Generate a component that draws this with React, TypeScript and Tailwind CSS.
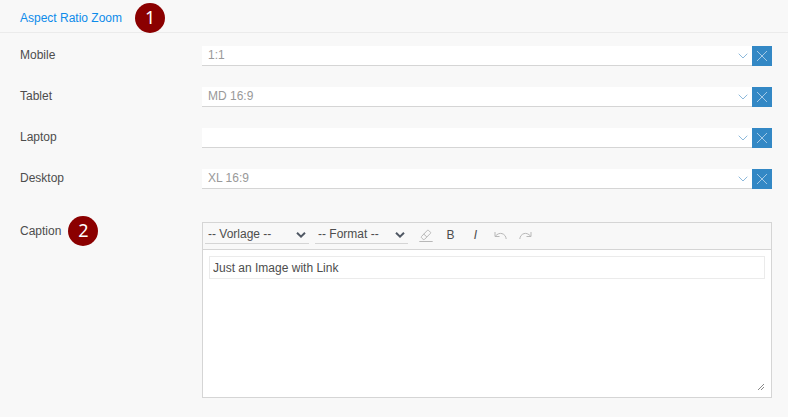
import type { ReactNode } from "react";

interface RatioField {
  id: string;
  label: string;
  value: string;
}

const ratioFields: RatioField[] = [
  { id: "mobile", label: "Mobile", value: "1:1" },
  { id: "tablet", label: "Tablet", value: "MD 16:9" },
  { id: "laptop", label: "Laptop", value: "" },
  { id: "desktop", label: "Desktop", value: "XL 16:9" },
];

function Marker({ children }: { children: ReactNode }) {
  return (
    <span className="flex size-[30px] shrink-0 items-center justify-center rounded-full bg-[#8b0000] pb-0.5 font-['Noto_Sans',sans-serif] text-[18px] leading-none text-white">
      {children}
    </span>
  );
}

function RatioRow({ id, label, value }: RatioField) {
  return (
    <div className="flex h-5 items-center">
      <label htmlFor={id} className="w-[182px] shrink-0 pb-0.5 leading-[18px]">
        {label}
      </label>
      <div className="relative h-5 min-w-0 flex-1">
        <select
          id={id}
          defaultValue={value}
          className="block h-5 w-full appearance-none border-b border-[#d5d5d5] bg-white px-1.5 pb-px text-[#999]"
        >
          <option value={value}>{value}</option>
        </select>
        <svg
          viewBox="0 0 10 6"
          className="pointer-events-none absolute top-[7px] right-1 h-1.5 w-2.5"
          fill="none"
          stroke="#8db9db"
        >
          <path d="M.7.7 5 5 9.3.7" />
        </svg>
      </div>
      <button
        type="button"
        aria-label={`Clear ${label}`}
        className="flex size-5 shrink-0 items-center justify-center bg-[#3388c5]"
      >
        <svg viewBox="0 0 10 10" className="size-2.5" fill="none" stroke="#a3c9e6">
          <path d="M0 0 10 10M10 0 0 10" />
        </svg>
      </button>
    </div>
  );
}

function ToolbarSelect({ label, text, width }: { label: string; text: string; width: string }) {
  return (
    <div className={`relative ${width}`}>
      <select
        aria-label={label}
        className="block h-4 w-full appearance-none border-b border-[#d5d5d5] bg-transparent px-[3px] pb-0.5 leading-[13px]"
      >
        <option>{text}</option>
      </select>
      <svg
        viewBox="0 0 10 6"
        className="pointer-events-none absolute top-1 right-[3px] h-1.5 w-2.5"
        fill="none"
        stroke="#4f5763"
        strokeWidth="2"
      >
        <path d="M1 .8 5 4.6 9 .8" />
      </svg>
    </div>
  );
}

function ToolbarButton({ label, children }: { label: string; children: ReactNode }) {
  return (
    <button
      type="button"
      aria-label={label}
      className="flex h-[25px] w-[25px] items-center justify-center pb-0.5"
    >
      {children}
    </button>
  );
}

function CaptionEditor() {
  return (
    <div className="min-w-0 flex-1 border border-[#d5d5d5] bg-white">
      <div className="flex h-[27px] items-center border-b border-[#d5d5d5] bg-[#f8f8f8] pl-0.5">
        <ToolbarSelect label="Vorlage" text="-- Vorlage --" width="w-[104px]" />
        <div className="w-1.5" />
        <ToolbarSelect label="Format" text="-- Format --" width="w-[93px]" />
        <div className="w-[5px]" />
        <ToolbarButton label="Remove formatting">
          <svg viewBox="0 0 14 14" className="mt-0.5 size-3.5" fill="none" stroke="#b8b8b8">
            <path d="M8.4 1.3Q9 .8 9.6 1.4L11.4 3.2Q12 3.8 11.4 4.4L5.6 10.3Q5 10.9 4.2 10.4L2.5 8.8Q1.9 8.2 2.5 7.5ZM4.8 5.1 7.9 8" />
            <path d="M.3 12.5H13.7" />
          </svg>
        </ToolbarButton>
        <ToolbarButton label="Bold">B</ToolbarButton>
        <ToolbarButton label="Italic">
          <i>I</i>
        </ToolbarButton>
        <ToolbarButton label="Undo">
          <svg viewBox="0 0 13 9" className="h-[9px] w-[13px]" fill="none" stroke="#b8b8b8">
            <path d="M1 1V5.5H5.5M1.3 5.2C3.6 2.6 6 2 8 2.6 10.5 3.3 12 5.4 12.2 8" />
          </svg>
        </ToolbarButton>
        <ToolbarButton label="Redo">
          <svg viewBox="0 0 13 9" className="h-[9px] w-[13px]" fill="none" stroke="#b8b8b8">
            <path d="M12 1V5.5H7.5M11.7 5.2C9.4 2.6 7 2 5 2.6 2.5 3.3 1 5.4.8 8" />
          </svg>
        </ToolbarButton>
      </div>
      <div className="relative h-[147px] p-1.5">
        <input
          aria-label="Caption"
          defaultValue="Just an Image with Link"
          className="block h-[23px] w-full border border-[#ebebeb] px-[3px]"
        />
        <svg
          viewBox="0 0 8 8"
          className="absolute right-1.5 bottom-1.5 size-2"
          fill="none"
          stroke="#888"
        >
          <path d="M1 7 7 1M4 7 7 4" />
        </svg>
      </div>
    </div>
  );
}

export default function App() {
  return (
    <main className="min-h-screen bg-[#f8f8f8] pb-5 font-['Liberation_Sans',Arial,sans-serif] text-[12px] text-[#4d4d4d]">
      <header className="flex h-[33px] items-center gap-[13px] border-b border-[#ebebeb] pt-1 pl-5">
        <h2 className="text-[#0d8bea]">Aspect Ratio Zoom</h2>
        <Marker>1</Marker>
      </header>
      <form className="pt-[13px] pr-4 pl-5">
        <div className="flex flex-col gap-[21px]">
          {ratioFields.map((field) => (
            <RatioRow key={field.id} {...field} />
          ))}
        </div>
        <div className="mt-[33px] flex items-start">
          <div className="flex h-[18px] w-[182px] shrink-0 items-center gap-[7px]">
            <span>Caption</span>
            <Marker>2</Marker>
          </div>
          <CaptionEditor />
        </div>
      </form>
    </main>
  );
}
